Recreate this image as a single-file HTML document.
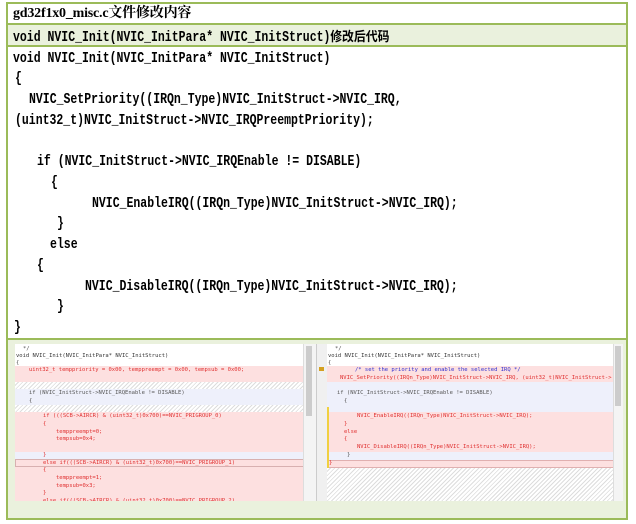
<!DOCTYPE html>
<html><head><meta charset="utf-8"><style>
*{margin:0;padding:0;box-sizing:border-box}
body{width:636px;height:524px;background:#fff;position:relative;overflow:hidden;font-family:"Liberation Mono","Noto Sans CJK SC",monospace}
.b{position:absolute;background:#9bbb59}
.t{position:absolute;white-space:nowrap;font-weight:bold;color:#000}
.c{font-family:"Liberation Mono","Noto Sans CJK SC",monospace;font-size:14.5px;transform:scaleX(0.793);transform-origin:0 50%;line-height:16px}
.s{position:absolute;white-space:nowrap;font-family:"DejaVu Sans Mono",monospace;font-size:5.5px;line-height:7px;color:#555}
.r{color:#e03030}.bl{color:#3030d0}
.band{position:absolute;left:0;right:0}
.hatch{background:repeating-linear-gradient(135deg,#fff 0 2px,#ddd 2px 3px)}
</style></head><body>
<div style="position:absolute;left:7px;top:25px;width:621px;height:21px;background:#eaf1dd"></div>
<div style="position:absolute;left:7px;top:339px;width:621px;height:180px;background:#eaf1dd"></div>
<div class="b" style="left:6px;top:2px;width:2px;height:518px"></div>
<div class="b" style="left:626px;top:2px;width:2px;height:518px"></div>
<div class="b" style="left:6px;top:2px;width:622px;height:2px"></div>
<div class="b" style="left:6px;top:23px;width:622px;height:2px"></div>
<div class="b" style="left:6px;top:45px;width:622px;height:2px"></div>
<div class="b" style="left:6px;top:338px;width:622px;height:2px"></div>
<div class="b" style="left:6px;top:518px;width:622px;height:2px"></div>

<div class="t" style="left:13px;top:6px;font-family:'Liberation Serif','Noto Serif CJK SC',serif;font-size:14px;line-height:16px;letter-spacing:-0.2px">gd32f1x0_misc.c文件修改内容</div>
<div class="t c" style="left:13px;top:28px">void NVIC_Init(NVIC_InitPara* NVIC_InitStruct)<span style="font-family:'Noto Sans CJK SC',sans-serif;display:inline-block;font-size:13px;transform:scaleX(1.15);transform-origin:0 50%">修改后代码</span></div>

<div class="t c" style="left:13px;top:51px">void NVIC_Init(NVIC_InitPara* NVIC_InitStruct)</div>
<div class="t c" style="left:15px;top:71px">{</div>
<div class="t c" style="left:29px;top:92px">NVIC_SetPriority((IRQn_Type)NVIC_InitStruct-&gt;NVIC_IRQ,</div>
<div class="t c" style="left:15px;top:113px">(uint32_t)NVIC_InitStruct-&gt;NVIC_IRQPreemptPriority);</div>
<div class="t c" style="left:37px;top:154px">if (NVIC_InitStruct-&gt;NVIC_IRQEnable != DISABLE)</div>
<div class="t c" style="left:51px;top:175px">{</div>
<div class="t c" style="left:92px;top:196px">NVIC_EnableIRQ((IRQn_Type)NVIC_InitStruct-&gt;NVIC_IRQ);</div>
<div class="t c" style="left:57px;top:216px">}</div>
<div class="t c" style="left:50px;top:237px">else</div>
<div class="t c" style="left:37px;top:258px">{</div>
<div class="t c" style="left:85px;top:279px">NVIC_DisableIRQ((IRQn_Type)NVIC_InitStruct-&gt;NVIC_IRQ);</div>
<div class="t c" style="left:57px;top:299px">}</div>
<div class="t c" style="left:14px;top:320px">}</div>

<!-- left panel -->
<div style="position:absolute;left:15px;top:344px;width:301px;height:157px;background:#fff;overflow:hidden">
 <div class="band" style="top:22px;height:16px;background:#fde0e0"></div>
 <div class="band hatch" style="top:38px;height:7px"></div>
 <div class="band" style="top:45px;height:16px;background:#eef0fb"></div>
 <div class="band hatch" style="top:61px;height:7px"></div>
 <div class="band" style="top:68px;height:40px;background:#fde0e0"></div>
 <div class="band" style="top:108px;height:8px;background:#eef0fb"></div>
 <div class="band" style="top:116px;height:41px;background:#fde0e0"></div>
 <div class="band" style="top:115px;height:8px;border:1px solid #d8b0b0"></div>
 <div style="position:absolute;right:0;top:0;width:13px;height:157px;background:#f4f4f4;border-left:1px solid #ddd"></div>
 <div style="position:absolute;right:4px;top:2px;width:6px;height:70px;background:#ccc"></div>
 <div class="s" style="left:8px;top:2px">*/</div>
 <div class="s" style="left:1px;top:9px;color:#333">void NVIC_Init(NVIC_InitPara* NVIC_InitStruct)</div>
 <div class="s" style="left:1px;top:16px">{</div>
 <div class="s r" style="left:14px;top:23px">uint32_t temppriority = 0x00, temppreempt = 0x00, tempsub = 0x00;</div>
 <div class="s" style="left:14px;top:46px">if (NVIC_InitStruct->NVIC_IRQEnable != DISABLE)</div>
 <div class="s" style="left:14px;top:54px">{</div>
 <div class="s r" style="left:28px;top:69px">if (((SCB->AIRCR) &amp; (uint32_t)0x700)==NVIC_PRIGROUP_0)</div>
 <div class="s r" style="left:28px;top:77px">{</div>
 <div class="s r" style="left:41px;top:85px">temppreempt=0;</div>
 <div class="s r" style="left:41px;top:92px">tempsub=0x4;</div>
 <div class="s r" style="left:28px;top:108px">}</div>
 <div class="s r" style="left:28px;top:116px">else if(((SCB->AIRCR) &amp; (uint32_t)0x700)==NVIC_PRIGROUP_1)</div>
 <div class="s r" style="left:28px;top:123px">{</div>
 <div class="s r" style="left:41px;top:131px">temppreempt=1;</div>
 <div class="s r" style="left:41px;top:139px">tempsub=0x3;</div>
 <div class="s r" style="left:28px;top:146px">}</div>
 <div class="s r" style="left:28px;top:154px">else if(((SCB->AIRCR) &amp; (uint32_t)0x700)==NVIC_PRIGROUP_2)</div>
</div>
<div style="position:absolute;left:316px;top:344px;width:11px;height:157px;background:#f0f0f0;border-left:1px solid #ccc"></div>
<div style="position:absolute;left:319px;top:367px;width:5px;height:4px;background:#d4a020"></div>
<!-- right panel -->
<div style="position:absolute;left:327px;top:344px;width:296px;height:157px;background:#fff;overflow:hidden">
 <div class="band" style="top:22px;height:16px;background:#fde0e0"></div>
 <div class="band" style="top:38px;height:30px;background:#eef0fb"></div>
 <div class="band" style="top:68px;height:40px;background:#fde0e0"></div>
 <div class="band" style="top:108px;height:8px;background:#eef0fb"></div>
 <div class="band" style="top:116px;height:8px;background:#fde0e0;border:1px solid #e0b0b0"></div>
 <div class="band hatch" style="top:124px;height:33px"></div>
 <div style="position:absolute;left:0;top:63px;width:2px;height:61px;background:#f0d040"></div>
 <div style="position:absolute;right:0;top:0;width:10px;height:157px;background:#f4f4f4;border-left:1px solid #ddd"></div>
 <div style="position:absolute;right:2px;top:2px;width:6px;height:60px;background:#ccc"></div>
 <div class="s" style="left:8px;top:2px">*/</div>
 <div class="s" style="left:1px;top:9px;color:#333">void NVIC_Init(NVIC_InitPara* NVIC_InitStruct)</div>
 <div class="s" style="left:1px;top:16px">{</div>
 <div class="s bl" style="left:28px;top:23px">/* set the priority and enable the selected IRQ */</div>
 <div class="s r" style="left:13px;top:31px">NVIC_SetPriority((IRQn_Type)NVIC_InitStruct->NVIC_IRQ, (uint32_t)NVIC_InitStruct-&gt;</div>
 <div class="s" style="left:10px;top:46px">if (NVIC_InitStruct->NVIC_IRQEnable != DISABLE)</div>
 <div class="s" style="left:17px;top:54px">{</div>
 <div class="s r" style="left:30px;top:69px">NVIC_EnableIRQ((IRQn_Type)NVIC_InitStruct->NVIC_IRQ);</div>
 <div class="s r" style="left:17px;top:77px">}</div>
 <div class="s r" style="left:17px;top:85px">else</div>
 <div class="s r" style="left:17px;top:92px">{</div>
 <div class="s r" style="left:30px;top:100px">NVIC_DisableIRQ((IRQn_Type)NVIC_InitStruct->NVIC_IRQ);</div>
 <div class="s" style="left:20px;top:108px">}</div>
 <div class="s r" style="left:2px;top:116px">}</div>
</div>
</body></html>
